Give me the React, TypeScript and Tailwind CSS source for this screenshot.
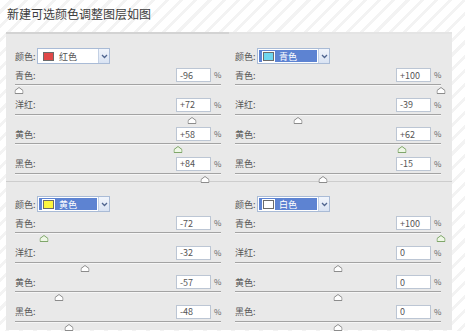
import React from "react";

type Panel = {
  color: string;
  swatch: string;
  selected: boolean;
  values: number[];
  active: boolean[];
};

const panels: Panel[] = [
  { color: "红色", swatch: "#e04848", selected: false, values: [-96, 72, 58, 84], active: [false, false, true, false] },
  { color: "青色", swatch: "#6fd6ef", selected: true, values: [100, -39, 62, -15], active: [false, false, true, false] },
  { color: "黄色", swatch: "#fdf63e", selected: true, values: [-72, -32, -57, -48], active: [true, false, false, false] },
  { color: "白色", swatch: "#ffffff", selected: true, values: [100, 0, 0, 0], active: [true, false, false, false] },
];

const labels = ["青色:", "洋红:", "黄色:", "黑色:"];

const fmt = (v: number) => (v > 0 ? `+${v}` : String(v));

function Thumb({ active }: { active: boolean }) {
  return (
    <svg width="9" height="7" viewBox="0 0 9 7" className="block">
      <path
        d="M4.5 0.5 L8.5 3.5 L8.5 6.5 L0.5 6.5 L0.5 3.5 Z"
        fill={active ? "#eef7e6" : "#ffffff"}
        stroke={active ? "#7fa66a" : "#8c8c8c"}
        strokeWidth="1"
      />
    </svg>
  );
}

function Row({ label, value, active, last }: { label: string; value: number; active: boolean; last: boolean }) {
  const pct = ((value + 100) / 200) * 100;
  return (
    <div className={last ? "h-[26px]" : "h-[29.5px]"}>
      <div className="flex h-[14px] items-center justify-between">
        <span className="text-[9px] leading-none text-[#555]">{label}</span>
        <div className="flex items-center">
          <div className="flex h-[14px] w-[35px] items-center border border-[#bcc6d4] bg-white pl-[3px] text-[9px] leading-none text-[#555]">
            {fmt(value)}
          </div>
          <span className="ml-[3px] w-[7px] text-[8px] leading-none text-[#666]">%</span>
        </div>
      </div>
      <div className="relative mt-[2px] h-[2px] border-t border-[#a3a3a3] border-b border-b-[#f6f6f6]">
        <div className="absolute top-[2px] -translate-x-1/2" style={{ left: `${pct}%` }}>
          <Thumb active={active} />
        </div>
      </div>
    </div>
  );
}

function Dropdown({ p }: { p: Panel }) {
  return (
    <div className="flex h-[16px] items-center">
      <span className="w-[22px] text-[9px] leading-none text-[#555]">颜色:</span>
      <div className="flex h-[16px] w-[73px] border border-[#a9bbd6] bg-white">
        <div
          className={
            p.selected
              ? "m-[1px] flex flex-1 items-center bg-[#5d83d2] pl-[4px]"
              : "m-[1px] flex flex-1 items-center bg-white pl-[4px]"
          }
        >
          <div
            className="h-[9px] w-[11px] border border-[#6b6b6b] outline outline-1 outline-white"
            style={{ backgroundColor: p.swatch }}
          />
          <span
            className={
              p.selected
                ? "ml-[5px] text-[9px] leading-none text-white"
                : "ml-[5px] text-[9px] leading-none text-[#555]"
            }
          >
            {p.color}
          </span>
        </div>
        <div className="flex w-[11px] items-center justify-center border-l border-[#c3d0e4] bg-gradient-to-b from-[#f1f5fc] to-[#d9e3f3]">
          <svg width="7" height="5" viewBox="0 0 7 5">
            <path d="M1 1 L3.5 3.5 L6 1" fill="none" stroke="#4f658f" strokeWidth="1.3" />
          </svg>
        </div>
      </div>
    </div>
  );
}

function Cell({ p, idx }: { p: Panel; idx: number }) {
  const left = idx % 2 === 0;
  const top = idx < 2;
  const cls = [
    "h-[149px] pt-[14px]",
    left ? "pl-[9px] pr-[8px]" : "pl-[6px] pr-[11px]",
    top && left ? "border-t-2 border-[#d3d3d3]" : "",
    top && !left ? "border-t-2 border-[#e4e4e4]" : "",
    !top ? "border-t border-[#cdcdcd]" : "",
  ].join(" ");
  return (
    <div className={cls}>
      <Dropdown p={p} />
      <div className="mt-[4px]">
        {labels.map((l, i) => (
          <Row key={l} label={l} value={p.values[i]} active={p.active[i]} last={i === 3} />
        ))}
      </div>
    </div>
  );
}

export default function App() {
  return (
    <div
      className="h-[331px] w-[465px] overflow-hidden bg-[repeating-linear-gradient(135deg,#ffffff_0px,#ffffff_7px,#f3f3f3_7px,#f3f3f3_10px)]"
      style={{ fontFamily: '"Noto Sans CJK SC", "Liberation Sans", sans-serif' }}
    >
      <div className="h-[32px] pl-[7px] pt-[6px] text-[12px] leading-[16px] text-[#3c3c3c]">
        新建可选颜色调整图层如图
      </div>
      <div className="ml-[6px] grid w-[446px] grid-cols-2 bg-[#e9e9e9]">
        {panels.map((p, i) => (
          <Cell key={i} p={p} idx={i} />
        ))}
      </div>
    </div>
  );
}
